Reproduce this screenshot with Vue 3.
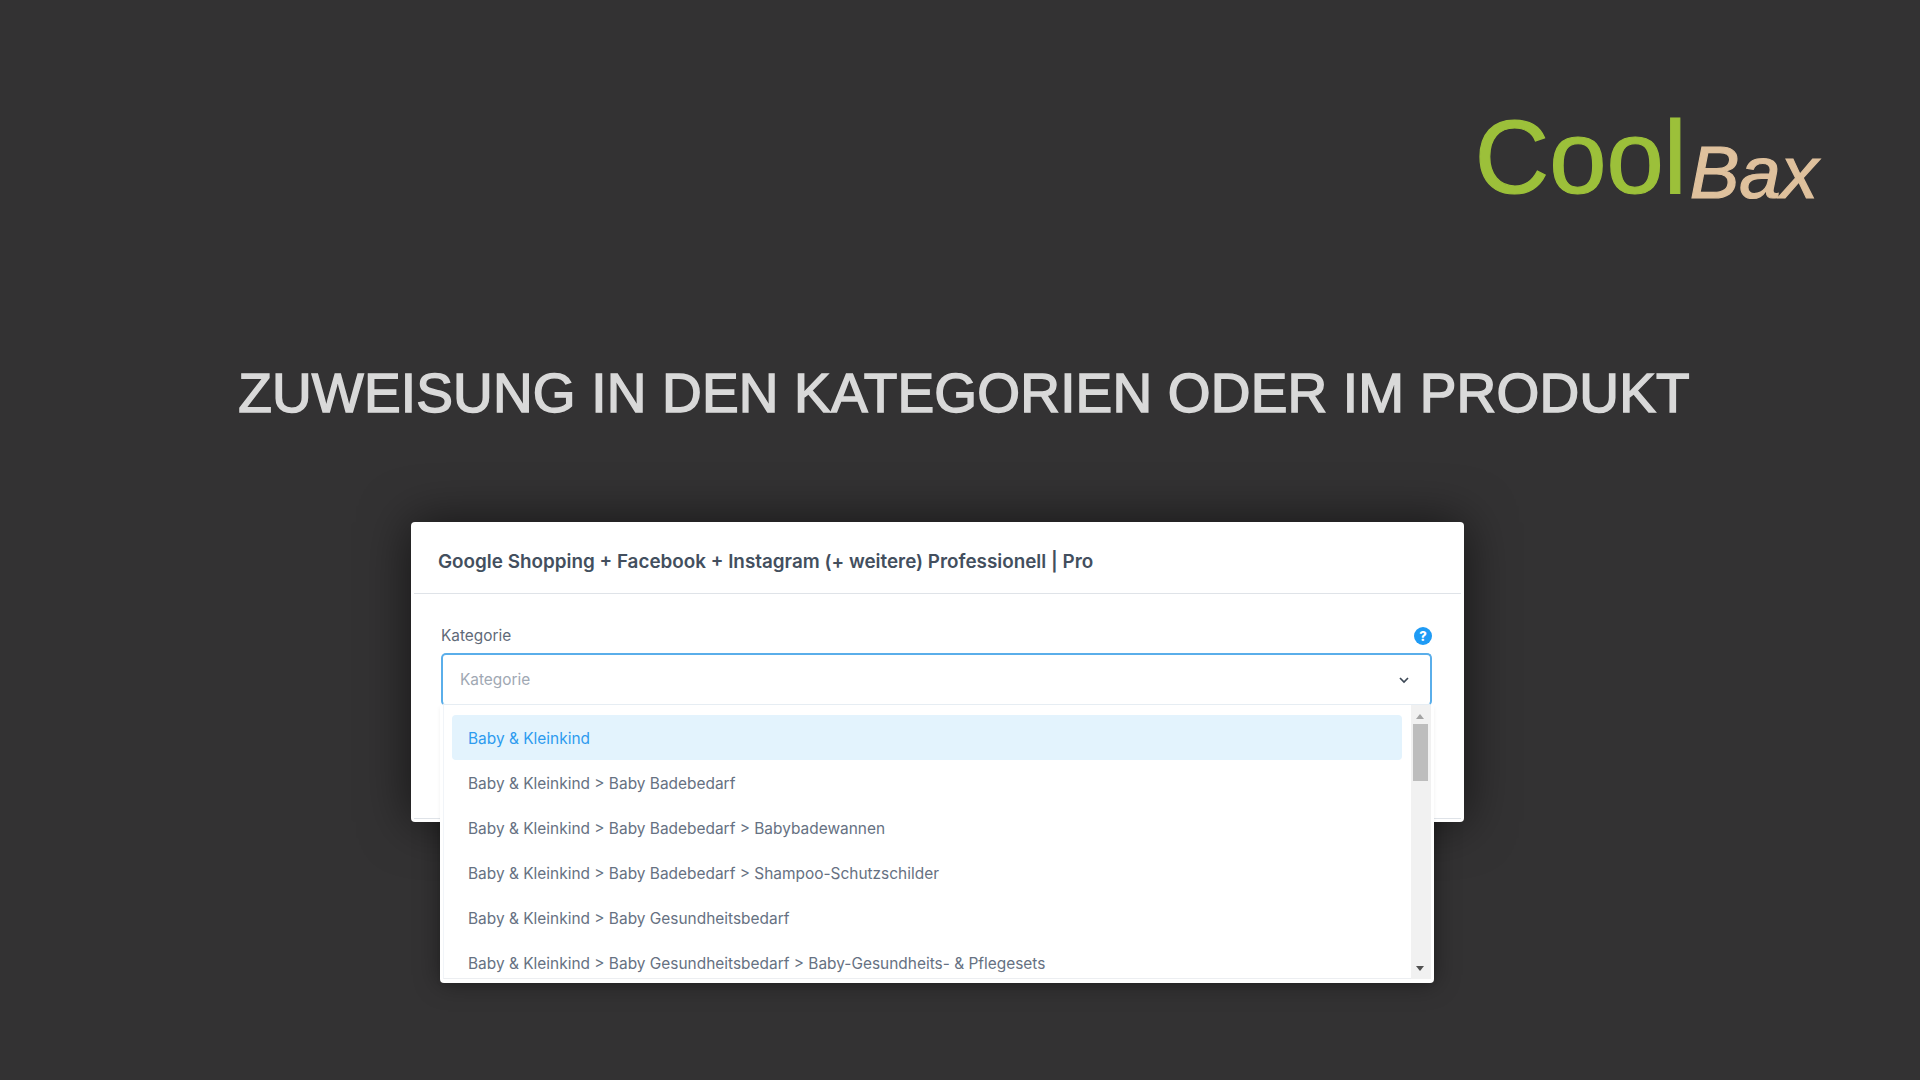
<template>
  <main class="slide">
    <div class="logo-row">
      <div class="logo"><span class="cool">Cool</span><span class="bax">Bax</span></div>
    </div>
    <h1 class="headline">ZUWEISUNG IN DEN KATEGORIEN ODER IM PRODUKT</h1>
    <section class="card">
      <header class="card-head">Google Shopping + Facebook + Instagram (+ weitere) Professionell | Pro</header>
      <div class="card-body">
        <div class="label-row">
          <span>Kategorie</span>
          <span class="help">?</span>
        </div>
        <div class="select">
          <span>Kategorie</span>
          <svg width="12" height="8" viewBox="0 0 12 8"><path d="M2 2l4 4 4-4" fill="none" stroke="#3d4856" stroke-width="1.7"/></svg>
        </div>
        <div class="button-sliver"></div>
      </div>
      <div class="card-foot"></div>
      <div class="dropdown-shadow"></div>
      <div class="dropdown">
        <ul class="list">
          <li v-for="(item, i) in items" :key="item" :class="{ active: i === 0 }">{{ item }}</li>
        </ul>
        <div class="scrollbar">
          <i class="arrow up"></i>
          <div class="thumb"></div>
          <i class="arrow down"></i>
        </div>
      </div>
    </section>
  </main>
</template>

<script setup>
const items = [
  'Baby & Kleinkind',
  'Baby & Kleinkind > Baby Badebedarf',
  'Baby & Kleinkind > Baby Badebedarf > Babybadewannen',
  'Baby & Kleinkind > Baby Badebedarf > Shampoo-Schutzschilder',
  'Baby & Kleinkind > Baby Gesundheitsbedarf',
  'Baby & Kleinkind > Baby Gesundheitsbedarf > Baby-Gesundheits- & Pflegesets'
]
</script>

<style>
html, body { margin: 0; background: #333233; }
</style>

<style scoped>
.slide {
  width: 1920px;
  height: 1080px;
  background: #333233;
  overflow: hidden;
  isolation: isolate;
  display: flex;
  flex-direction: column;
  font-family: Inter, "Liberation Sans", sans-serif;
}
.logo-row {
  height: 209px;
  padding-top: 101px;
  padding-right: 102px;
  box-sizing: border-box;
  display: flex;
  justify-content: flex-end;
}
.logo {
  font-family: "Liberation Sans", Arial, sans-serif;
  display: flex;
  align-items: baseline;
  height: 108px;
  line-height: 113px;
}
.cool { font-size: 103px; color: #9cc03a; -webkit-text-stroke: 1.2px #9cc03a; }
.bax { font-size: 74.5px; font-style: italic; color: #dfc19d; margin-left: 3px; transform: translateY(5px); -webkit-text-stroke: 1.2px #dfc19d; }
.headline {
  margin: 153px 0 0;
  text-align: center;
  font-family: "Liberation Sans", Arial, sans-serif;
  font-weight: 400;
  font-size: 55px;
  letter-spacing: .17px;
  line-height: 62px;
  color: #d9d9d9;
  -webkit-text-stroke: 1.5px #d9d9d9;
  padding-left: 8px;
}
.card {
  position: relative;
  margin: 98px 0 0 411px;
  width: 1053px;
  height: 300px;
  background: #fff;
  border-radius: 4px;
  box-shadow: 0 0 50px rgba(0, 0, 0, .6);
}
.card-head {
  margin: 0 3px;
  padding: 8px 0 0 24px;
  height: 63px;
  border-bottom: 1px solid #dfe3e8;
  display: flex;
  align-items: center;
  font-size: 18.85px;
  font-weight: 600;
  color: #434f5e;
}
.card-foot {
  position: absolute;
  left: 3px;
  right: 3px;
  bottom: 3px;
  height: 1px;
  background: #dfe3e8;
}
.card-body { padding: 33px 32px 0 30px; position: relative; }
.label-row {
  display: flex;
  justify-content: space-between;
  align-items: center;
  font-size: 15.4px;
  line-height: 18px;
  color: #5f6a78;
}
.help {
  width: 18px;
  height: 18px;
  border-radius: 50%;
  background: #1f9bf5;
  color: #fff;
  font-size: 13px;
  font-weight: 800;
  line-height: 18px;
  text-align: center;
}
.select {
  margin-top: 8px;
  height: 49px;
  border: 2px solid #5aaeea;
  border-bottom-color: #e7eef4;
  border-radius: 5px;
  padding: 0 20px 0 17px;
  display: flex;
  align-items: center;
  justify-content: space-between;
  font-size: 15.4px;
  color: #a0a8b3;
}
.button-sliver {
  position: absolute;
  left: 30px;
  top: 150px;
  width: 2px;
  height: 40px;
  background: #72b8ec;
}
.dropdown-shadow {
  position: absolute;
  z-index: -1;
  left: 29px;
  top: 183px;
  width: 994px;
  height: 278px;
  box-shadow: 0 0 24px rgba(0, 0, 0, .4);
}
.dropdown {
  position: absolute;
  left: 29px;
  top: 183px;
  width: 994px;
  height: 278px;
  box-sizing: border-box;
  padding: 0 3px 4px;
  display: flex;
  background: #fff;
  border-radius: 0 0 4px 4px;
  box-shadow: 0 2px 4px rgba(0, 0, 0, .06);
  overflow: hidden;
}
.list {
  flex: 1;
  min-width: 0;
  margin: 0;
  padding: 10px 9px 0 9px;
  list-style: none;
  overflow: hidden;
  border-left: 1px solid #f1f4f8;
  border-bottom: 1px solid #eceef1;
}
.list li {
  height: 45px;
  box-sizing: border-box;
  padding: 2px 0 0 16px;
  margin-left: -1px;
  display: flex;
  align-items: center;
  font-size: 15.45px;
  color: #667182;
  border-radius: 4px;
  white-space: nowrap;
}
.list li.active { background: #e3f3fd; color: #2d9bef; }
.scrollbar {
  width: 20px;
  background: #f1f1f1;
  position: relative;
  flex: none;
}
.arrow {
  position: absolute;
  left: 5px;
  width: 0;
  height: 0;
  border-left: 4px solid transparent;
  border-right: 4px solid transparent;
}
.arrow.up { top: 9px; border-bottom: 5px solid #a3a3a3; }
.arrow.down { bottom: 8px; border-top: 5px solid #505050; }
.thumb {
  position: absolute;
  left: 2px;
  top: 19px;
  width: 15px;
  height: 57px;
  background: #bdbdbd;
}
</style>
